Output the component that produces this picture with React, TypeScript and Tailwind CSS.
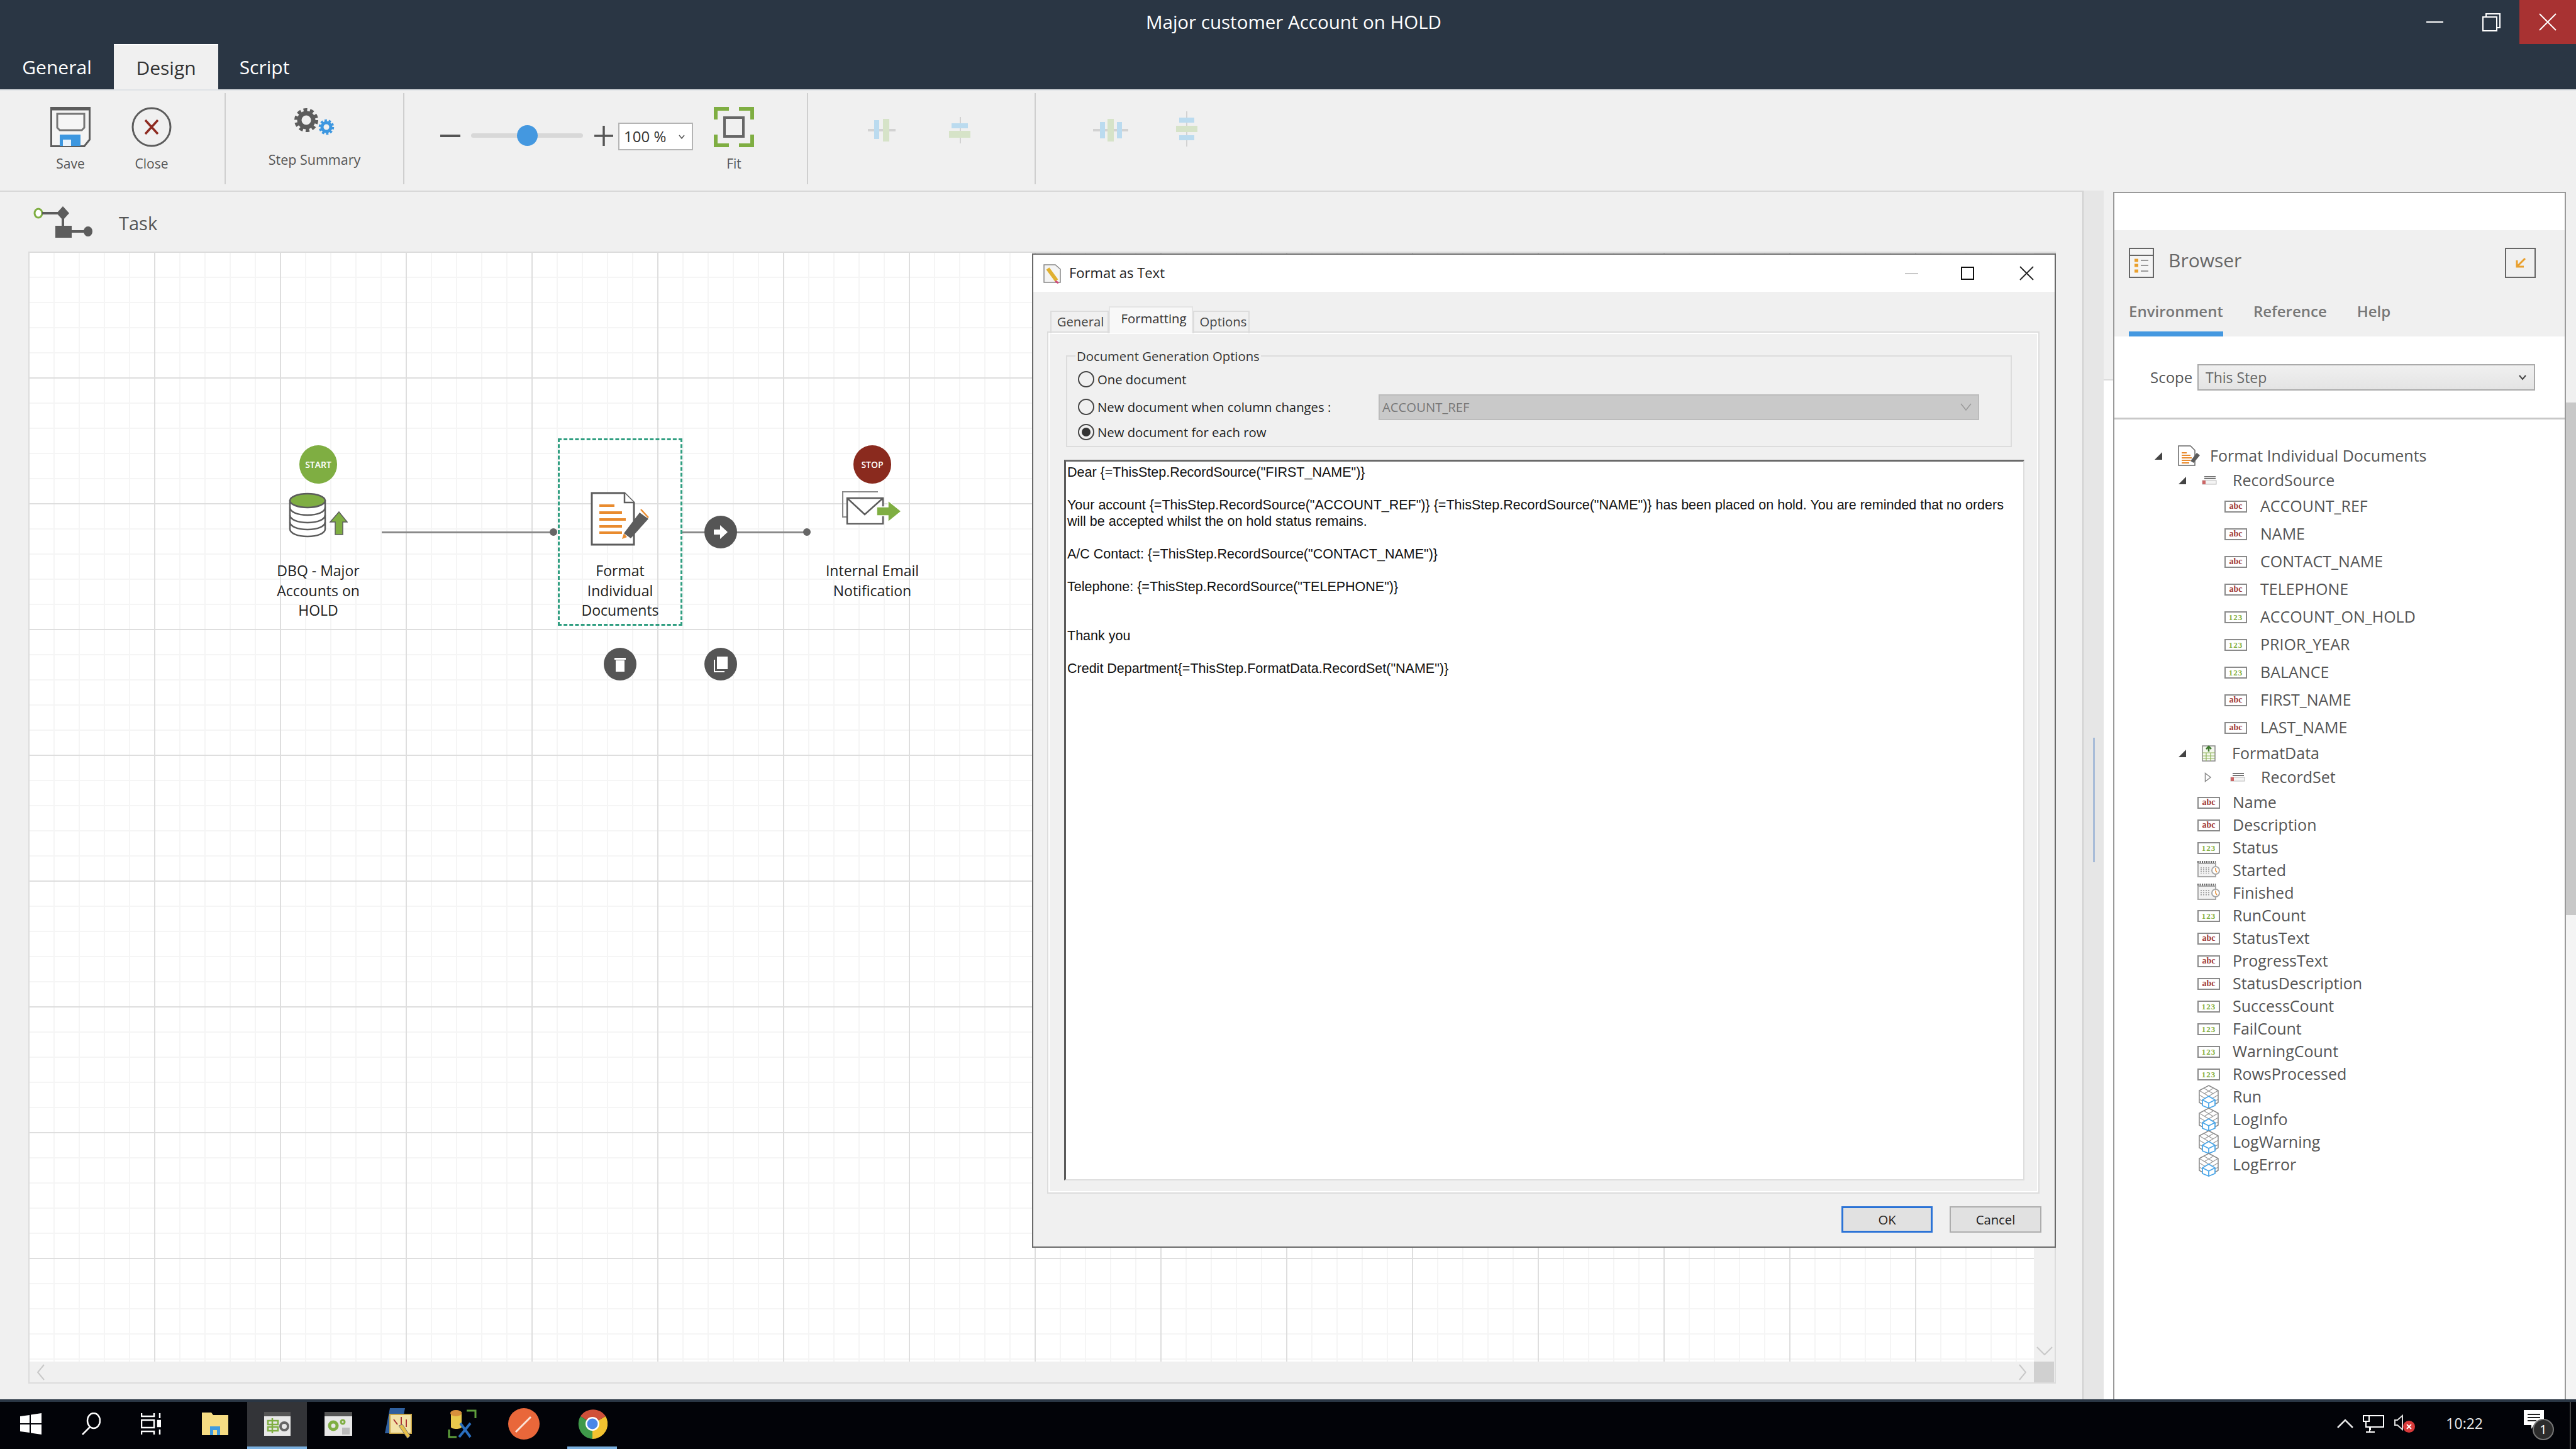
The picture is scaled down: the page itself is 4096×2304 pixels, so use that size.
const Sep = () => <div className="mt-[4px] h-[145px] w-[2px] shrink-0 bg-[#cfcfcf]" />;

const SaveIcon = () => (
  <svg width="64" height="64" viewBox="0 0 64 64" fill="none">
    <path d="M1.5 1.5H62.5V52L54 62.5H1.5Z" fill="#f4f4f4" stroke="#5c5c5c" strokeWidth="3" />
    <path d="M1.5 3H62.5" stroke="#5c5c5c" strokeWidth="5" />
    <path d="M11 11H54V33L50 37H15L11 33Z" fill="#f6f6f6" stroke="#777" strokeWidth="3" />
    <rect x="15" y="44" width="33" height="18" fill="#3d97e0" />
    <rect x="20" y="52" width="13" height="10" fill="#e8f2fb" />
  </svg>
);

const CloseIcon = () => (
  <svg width="64" height="64" viewBox="0 0 64 64" fill="none">
    <circle cx="32" cy="32" r="30" stroke="#5c5c5c" strokeWidth="3" />
    <path d="M22 21L42 43M42 21L22 43" stroke="#8e2a20" strokeWidth="3.5" />
  </svg>
);

const GearsIcon = () => (
  <svg width="66" height="44" viewBox="0 0 66 44" fill="none">
    <circle cx="20" cy="19" r="11" stroke="#5c5c5c" strokeWidth="7" />
    <circle cx="20" cy="19" r="16.5" stroke="#5c5c5c" strokeWidth="5" strokeDasharray="6 4.4" />
    <circle cx="52" cy="30" r="7" stroke="#3d97e0" strokeWidth="5" />
    <circle cx="52" cy="30" r="10.5" stroke="#3d97e0" strokeWidth="3.5" strokeDasharray="3.8 2.8" />
  </svg>
);

const FitIcon = () => (
  <svg width="64" height="64" viewBox="0 0 64 64" fill="none">
    <path d="M3 20V3H24M40 3H61V20M3 44V61H24M40 61H61V44" stroke="#7fae42" strokeWidth="6" />
    <rect x="17" y="17" width="30" height="30" fill="none" stroke="#666" strokeWidth="4" />
  </svg>
);

const TaskIcon = () => (
  <svg width="94" height="50" viewBox="0 0 94 50" fill="none">
    <ellipse cx="8" cy="11" rx="6" ry="7" stroke="#7fae42" strokeWidth="3" fill="#fff" />
    <path d="M14 11H40" stroke="#5c5c5c" strokeWidth="4" />
    <path d="M47 0L57 11L47 22L37 11Z" fill="#5c5c5c" />
    <path d="M47 20V33" stroke="#5c5c5c" strokeWidth="4" />
    <rect x="35" y="31" width="26" height="19" fill="#5c5c5c" />
    <path d="M61 40H82" stroke="#5c5c5c" strokeWidth="4" />
    <ellipse cx="87" cy="40" rx="7" ry="8" fill="#5c5c5c" />
  </svg>
);

const AlignIcon = ({ variant }: { variant: number }) => {
  if (variant === 0)
    return (
      <svg width="44" height="36" viewBox="0 0 44 36">
        <rect y="16" width="44" height="4" fill="#d2d2d2" />
        <rect x="10" y="2" width="8" height="30" fill="#bbdbef" />
        <rect x="24" y="0" width="10" height="36" fill="#d6e3c8" />
      </svg>
    );
  if (variant === 1)
    return (
      <svg width="36" height="42" viewBox="0 0 36 42">
        <rect x="17" width="2" height="42" fill="#d2d2d2" />
        <rect x="4" y="10" width="26" height="8" fill="#bbdbef" />
        <rect x="0" y="22" width="34" height="11" fill="#d6e3c8" />
      </svg>
    );
  if (variant === 2)
    return (
      <svg width="56" height="36" viewBox="0 0 56 36">
        <rect y="16" width="56" height="4" fill="#d2d2d2" />
        <rect x="11" y="5" width="8" height="26" fill="#bbdbef" />
        <rect x="23" y="0" width="10" height="36" fill="#d6e3c8" />
        <rect x="38" y="5" width="8" height="26" fill="#bbdbef" />
      </svg>
    );
  return (
    <svg width="34" height="56" viewBox="0 0 34 56">
      <rect x="16" width="2" height="56" fill="#d2d2d2" />
      <rect x="5" y="10" width="24" height="8" fill="#bbdbef" />
      <rect x="0" y="23" width="34" height="10" fill="#d6e3c8" />
      <rect x="5" y="38" width="24" height="8" fill="#bbdbef" />
    </svg>
  );
};

const DbIcon = () => (
  <svg width="94" height="72" viewBox="0 0 94 72" fill="none">
    <path d="M2 12V58C2 65 14 70 30 70S58 65 58 58V12" fill="#fff" stroke="#5c5c5c" strokeWidth="2.5" />
    <path d="M2 24C2 31 14 36 30 36S58 31 58 24M2 36C2 43 14 48 30 48S58 43 58 36M2 47C2 54 14 59 30 59S58 54 58 47" stroke="#5c5c5c" strokeWidth="2.5" />
    <ellipse cx="30" cy="13" rx="28" ry="11" fill="#7fae42" stroke="#5c5c5c" strokeWidth="2.5" />
    <path d="M80 31L93 47H86V67H74V47H66Z" fill="#7fae42" stroke="#5c5c5c" strokeWidth="1.5" />
  </svg>
);

const DocIcon = () => (
  <svg width="94" height="86" viewBox="0 0 94 86" fill="none">
    <path d="M2 2H54L69 17V84H2Z" fill="#fff" stroke="#5c5c5c" strokeWidth="3" />
    <path d="M54 2V17H69" fill="#fff" stroke="#5c5c5c" strokeWidth="2.5" />
    <path d="M14 22H38M14 33H50M14 44H56M14 55H50M14 65H50" stroke="#e98b2e" strokeWidth="4" />
    <path d="M78 33L92 43L64 74L53 66Z" fill="#5c5c5c" />
    <path d="M80 28L92 41" stroke="#e98b2e" strokeWidth="2.5" />
    <path d="M53 66L50 75L58 72" fill="#e98b2e" />
  </svg>
);

const MailIcon = () => (
  <svg width="95" height="54" viewBox="0 0 95 54" fill="none">
    <path d="M57 2H1V42H8" stroke="#8a8a8a" strokeWidth="2" />
    <rect x="8" y="12" width="57" height="41" fill="#fff" stroke="#5c5c5c" strokeWidth="2.5" />
    <path d="M8 12L36 38L65 12" stroke="#5c5c5c" strokeWidth="2.5" />
    <path d="M55 26H73V16L94 33L73 50V40H55Z" fill="#7fae42" stroke="#fff" strokeWidth="1.5" />
  </svg>
);

const FieldIcon = ({ kind }: { kind: 'abc' | '123' }) => (
  <span className="flex h-[19px] w-[36px] shrink-0 items-center justify-center border-2 border-[#8a8a8a] bg-white">
    <span
      className={
        kind === 'abc'
          ? 'font-["Liberation_Serif"] text-[14px] font-bold leading-none text-[#a23b3b]'
          : 'font-["Liberation_Serif"] text-[13px] font-bold leading-none tracking-[1px] text-[#7fae42]'
      }
    >
      {kind}
    </span>
  </span>
);

const DateIcon = () => (
  <svg width="36" height="26" viewBox="0 0 36 26" fill="none" className="mb-[4px] shrink-0">
    <path d="M0 1.5H29" stroke="#666" strokeWidth="3" strokeDasharray="2 1.5" />
    <rect x="1" y="4" width="28" height="21" fill="#f2f2f2" stroke="#a8a8a8" strokeWidth="2" />
    <path d="M6 10V20M10 10V20M14 10V20M18 10V20" stroke="#aaa" strokeWidth="2" strokeDasharray="2 1" />
    <circle cx="29" cy="15" r="6" fill="#fff" stroke="#a8a8a8" strokeWidth="2" />
    <path d="M29 11V15L31 18" stroke="#e98b2e" strokeWidth="1.5" />
  </svg>
);

const MethodIcon = () => (
  <svg width="34" height="38" viewBox="0 0 34 38" fill="none" className="shrink-0">
    <path d="M17 1L32 9V28L17 37L2 28V9Z" stroke="#888" strokeWidth="1.5" />
    <path d="M2 9L17 18L32 9M9 5L24 14M25 5L10 14M2 16L12 22M32 16L22 22M2 23L10 27M32 23L24 27" stroke="#999" strokeWidth="1.2" />
    <path d="M17 18L27 24V33L17 37L7 33V24Z" fill="#fff" stroke="#4ba6e8" strokeWidth="1.8" />
    <path d="M7 24L17 29L27 24M17 29V37" stroke="#4ba6e8" strokeWidth="1.8" />
  </svg>
);

const SetIcon = () => (
  <svg width="24" height="14" viewBox="0 0 24 14" fill="none" className="shrink-0">
    <path d="M4 1H22M4 4H22" stroke="#777" strokeWidth="2" />
    <rect x="1" y="7" width="22" height="6" fill="#f4f4f4" stroke="#bbb" />
    <rect x="1" y="7" width="5" height="6" fill="#c66" />
  </svg>
);

const Expander = ({ open = true }: { open?: boolean }) =>
  open ? (
    <svg width="14" height="14" viewBox="0 0 14 14" className="shrink-0">
      <path d="M13 1V13H1Z" fill="#444" />
    </svg>
  ) : (
    <svg width="12" height="16" viewBox="0 0 12 16" className="shrink-0" fill="none">
      <path d="M1.5 1.5L10 8L1.5 14.5Z" stroke="#888" strokeWidth="1.5" />
    </svg>
  );

const srcFields: [string, 'abc' | '123'][] = [
  ['ACCOUNT_REF', 'abc'],
  ['NAME', 'abc'],
  ['CONTACT_NAME', 'abc'],
  ['TELEPHONE', 'abc'],
  ['ACCOUNT_ON_HOLD', '123'],
  ['PRIOR_YEAR', '123'],
  ['BALANCE', '123'],
  ['FIRST_NAME', 'abc'],
  ['LAST_NAME', 'abc'],
];

const props: [string, string][] = [
  ['Name', 'abc'],
  ['Description', 'abc'],
  ['Status', '123'],
  ['Started', 'date'],
  ['Finished', 'date'],
  ['RunCount', '123'],
  ['StatusText', 'abc'],
  ['ProgressText', 'abc'],
  ['StatusDescription', 'abc'],
  ['SuccessCount', '123'],
  ['FailCount', '123'],
  ['WarningCount', '123'],
  ['RowsProcessed', '123'],
  ['Run', 'method'],
  ['LogInfo', 'method'],
  ['LogWarning', 'method'],
  ['LogError', 'method'],
];

const bodyLines = [
  'Dear {=ThisStep.RecordSource("FIRST_NAME")}',
  '',
  'Your account {=ThisStep.RecordSource("ACCOUNT_REF")} {=ThisStep.RecordSource("NAME")} has been placed on hold. You are reminded that no orders',
  'will be accepted whilst the on hold status remains.',
  '',
  'A/C Contact: {=ThisStep.RecordSource("CONTACT_NAME")}',
  '',
  'Telephone: {=ThisStep.RecordSource("TELEPHONE")}',
  '',
  '',
  'Thank you',
  '',
  'Credit Department{=ThisStep.FormatData.RecordSet("NAME")}',
];

function Ribbon() {
  return (
    <div className="flex h-[161px] shrink-0 border-t-2 border-[#dfe3e6] bg-[#f0f0f0]">
      <div className="flex w-[357px] shrink-0 gap-[65px] pl-[80px] pt-[26px]">
        <div className="flex w-[64px] flex-col items-center">
          <SaveIcon />
          <span className="mt-[12px] text-[21px] leading-[28px] text-[#555]">Save</span>
        </div>
        <div className="flex w-[64px] flex-col items-center">
          <CloseIcon />
          <span className="mt-[12px] text-[21px] leading-[28px] text-[#555]">Close</span>
        </div>
      </div>
      <Sep />
      <div className="flex w-[282px] shrink-0 flex-col items-center pt-[28px]">
        <GearsIcon />
        <span className="mt-[24px] text-[21.5px] leading-[28px] text-[#555]">Step Summary</span>
      </div>
      <Sep />
      <div className="flex w-[640px] shrink-0 pl-[57px]">
        <div className="mt-[70px] h-[4px] w-[32px] bg-[#555]" />
        <div className="relative ml-[17px] mt-[68px] h-[7px] w-[178px] rounded-full bg-[#d8d8d8]">
          <div className="absolute left-[73px] top-[-13px] h-[33px] w-[33px] rounded-full bg-[#4498e0]" />
        </div>
        <svg width="30" height="32" viewBox="0 0 30 32" className="ml-[18px] mt-[56px] shrink-0">
          <path d="M0 16H30M15 0V32" stroke="#555" strokeWidth="3.5" />
        </svg>
        <div className="ml-[8px] mt-[51px] flex h-[44px] w-[119px] shrink-0 items-center border-2 border-[#b4b4b4] bg-white pl-[7px]">
          <span className="text-[24px] leading-none text-[#333]">100 %</span>
          <svg width="10" height="7" viewBox="0 0 10 7" className="ml-[20px]" fill="none">
            <path d="M1 1L5 6L9 1" stroke="#555" strokeWidth="1.5" />
          </svg>
        </div>
        <div className="ml-[33px] mt-[26px] flex w-[64px] flex-col items-center">
          <FitIcon />
          <span className="mt-[12px] text-[21px] leading-[28px] text-[#555]">Fit</span>
        </div>
      </div>
      <Sep />
      <div className="flex w-[360px] shrink-0 pl-[95px]">
        <div className="mt-[45px]"><AlignIcon variant={0} /></div>
        <div className="ml-[85px] mt-[42px]"><AlignIcon variant={1} /></div>
      </div>
      <Sep />
      <div className="flex pl-[91px]">
        <div className="mt-[45px]"><AlignIcon variant={2} /></div>
        <div className="ml-[76px] mt-[33px]"><AlignIcon variant={3} /></div>
      </div>
    </div>
  );
}

function Diagram() {
  return (
    <>
      <div className="absolute left-[560px] top-[443px] h-[3px] w-[273px] bg-[#8a8a8a]" />
      <div className="absolute left-[827px] top-[438px] h-[12px] w-[12px] rounded-full bg-[#666]" />
      <div className="absolute left-[1038px] top-[443px] h-[3px] w-[197px] bg-[#8a8a8a]" />
      <div className="absolute left-[1230px] top-[438px] h-[12px] w-[12px] rounded-full bg-[#666]" />

      <div className="absolute left-[429px] top-[306px] flex h-[61px] w-[60px] items-center justify-center rounded-full bg-[#7fae42] text-[14px] font-semibold text-white">START</div>
      <div className="absolute left-[412px] top-[381px]"><DbIcon /></div>
      <div className="absolute left-[359px] top-[490px] w-[200px] text-center text-[23px] leading-[31.5px] text-[#222]">DBQ - Major<br />Accounts on<br />HOLD</div>

      <div className="absolute left-[840px] top-[295px] h-[298px] w-[198px] border-[3px] border-dashed border-[#2f9e80]" />
      <div className="absolute left-[892px] top-[380px]"><DocIcon /></div>
      <div className="absolute left-[839px] top-[490px] w-[200px] text-center text-[23px] leading-[31.5px] text-[#222]">Format<br />Individual<br />Documents</div>

      <div className="absolute left-[1310px] top-[306px] flex h-[61px] w-[60px] items-center justify-center rounded-full bg-[#8a2a1e] text-[14px] font-semibold text-white">STOP</div>
      <div className="absolute left-[1292px] top-[378px]"><MailIcon /></div>
      <div className="absolute left-[1240px] top-[490px] w-[200px] text-center text-[23px] leading-[31.5px] text-[#222]">Internal Email<br />Notification</div>

      <div className="absolute left-[1073px] top-[418px] flex h-[52px] w-[52px] items-center justify-center rounded-full bg-[#555]">
        <svg width="26" height="24" viewBox="0 0 26 24"><path d="M2 8H12V1L24 12L12 23V16H2Z" fill="#fff" /></svg>
      </div>
      <div className="absolute left-[913px] top-[628px] flex h-[52px] w-[52px] items-center justify-center rounded-full bg-[#555]">
        <svg width="20" height="26" viewBox="0 0 20 26"><path d="M1 3H19V6H1ZM3 7H17V25H3Z" fill="#fff" /></svg>
      </div>
      <div className="absolute left-[1073px] top-[628px] flex h-[52px] w-[52px] items-center justify-center rounded-full bg-[#555]">
        <svg width="24" height="26" viewBox="0 0 24 26" fill="none">
          <rect x="6" y="1" width="17" height="20" fill="#fff" />
          <path d="M2 6V25H18" stroke="#fff" strokeWidth="2" />
        </svg>
      </div>
    </>
  );
}

function FormatDialog() {
  return (
    <div className="absolute left-[1641px] top-[403px] z-10 flex h-[1581px] w-[1628px] flex-col border-2 border-[#6a6a6a] bg-[#f0f0f0] font-['Open_Sans',sans-serif] text-[20.3px] text-[#222]">
      <div className="flex h-[59px] shrink-0 items-center bg-white pl-[15px]">
        <svg width="30" height="32" viewBox="0 0 30 32" fill="none">
          <path d="M2 2H20L28 9V30H2Z" fill="#f4f4f4" stroke="#888" strokeWidth="1.5" />
          <path d="M8 8L22 27" stroke="#e0b030" strokeWidth="6" />
          <path d="M20 28L25 31" stroke="#d04a7a" strokeWidth="3" />
        </svg>
        <span className="ml-[12px] pb-[2px] text-[22px] text-[#222]">Format as Text</span>
        <div className="ml-auto mr-[33px] flex items-center">
          <div className="h-[2px] w-[21px] bg-[#c8c8c8]" />
          <div className="ml-[68px] h-[21px] w-[21px] border-2 border-[#111]" />
          <svg width="23" height="23" viewBox="0 0 23 23" className="ml-[72px]" fill="none">
            <path d="M1 1L22 22M22 1L1 22" stroke="#222" strokeWidth="1.8" />
          </svg>
        </div>
      </div>

      <div className="relative z-10 mt-[23px] flex h-[43px] shrink-0 items-end pl-[27px]">
        <div className="flex h-[36px] w-[93px] items-center justify-center border-2 border-b-0 border-[#dcdcdc] pb-[3px] pl-[3px] text-[#444]">General</div>
        <div className="flex h-[43px] w-[134px] items-center justify-center border-x-2 border-t-2 border-[#e4e4e4] bg-[#f8f8f8] pb-[7px] pl-[9px] text-[#333]">Formatting</div>
        <div className="flex h-[36px] w-[90px] items-center justify-center border-2 border-b-0 border-[#dcdcdc] pb-[3px] pl-[6px] text-[#444]">Options</div>
      </div>

      <div className="ml-[22px] mr-[24px] mt-[-3px] flex h-[1371px] shrink-0 flex-col border-2 border-[#dcdcdc] pl-[28px] pt-[36px] shadow-[inset_0_0_0_2px_#fff]">
        <div className="relative h-[146px] w-[1504px] shrink-0 border-2 border-[#dcdcdc]">
          <span className="absolute left-[13px] top-[-14px] bg-[#f0f0f0] px-[2px] leading-[26px] text-[#333]">Document Generation Options</span>
          <div className="pl-[17px] pt-[14px]">
            <div className="flex h-[44px] items-center">
              <span className="h-[26px] w-[26px] rounded-full border-2 border-[#444]" />
              <span className="ml-[5px]">One document</span>
            </div>
            <div className="flex h-[44px] items-center">
              <span className="h-[26px] w-[26px] rounded-full border-2 border-[#444]" />
              <span className="ml-[5px]">New document when column changes :</span>
              <div className="ml-auto mr-[50px] flex h-[41px] w-[955px] items-center justify-between border-2 border-[#bcbcbc] bg-[#c9c9c9] pl-[4px] pr-[10px] text-[#777]">
                <span>ACCOUNT_REF</span>
                <svg width="18" height="12" viewBox="0 0 18 12" fill="none"><path d="M1 1L9 11L17 1" stroke="#999" strokeWidth="1.5" /></svg>
              </div>
            </div>
            <div className="flex h-[36px] items-center">
              <span className="flex h-[26px] w-[26px] items-center justify-center rounded-full border-2 border-[#444]">
                <span className="h-[14px] w-[14px] rounded-full bg-[#333]" />
              </span>
              <span className="ml-[5px]">New document for each row</span>
            </div>
          </div>
        </div>
        <div className="ml-[-3px] mt-[20px] h-[1146px] w-[1527px] shrink-0 border-b-2 border-l-[3px] border-r-2 border-t-[3px] border-b-[#dedede] border-l-[#5a5a5a] border-r-[#dedede] border-t-[#6a6a6a] bg-white pl-[2px] pt-[4px] font-['Liberation_Sans',sans-serif] text-[21.5px] leading-[26px] text-[#111]">
          {bodyLines.map((line, i) => (
            <div key={i} className="h-[26px] whitespace-nowrap">{line}</div>
          ))}
        </div>
      </div>

      <div className="mr-[21px] mt-[20px] flex justify-end gap-[27px]">
        <div className="flex h-[42px] w-[145px] items-center justify-center border-[3px] border-[#2b73d6] bg-[#e1e1e1]">OK</div>
        <div className="flex h-[42px] w-[146px] items-center justify-center border-2 border-[#adadad] bg-[#e1e1e1]">Cancel</div>
      </div>
    </div>
  );
}

function BrowserPanel() {
  return (
    <div className="mt-[2px] flex w-[720px] shrink-0 flex-col border-x-2 border-t-2 border-[#9a9a9a] bg-white text-[#555]">
      <div className="h-[59px] shrink-0" />
      <div className="h-[169px] shrink-0 bg-[#f0f0f0] pl-[23px]">
        <div className="flex pt-[28px]">
          <svg width="40" height="48" viewBox="0 0 40 48" fill="none">
            <rect x="1" y="1" width="38" height="46" fill="#f4f4f4" stroke="#666" strokeWidth="2" />
            <path d="M1 12H39" stroke="#666" strokeWidth="2" />
            <path d="M9 20H15M9 28H15M9 37H15" stroke="#e9a02e" strokeWidth="5" />
            <path d="M19 20H31M19 28H31M19 37H31" stroke="#999" strokeWidth="2" />
          </svg>
          <span className="ml-[23px] text-[30px] leading-[40px] text-[#666]">Browser</span>
          <div className="ml-auto mr-[46px] flex h-[48px] w-[49px] items-center justify-center border-2 border-[#666]">
            <svg width="18" height="18" viewBox="0 0 18 18" fill="none"><path d="M16 2L3 15M3 5V15H14" stroke="#e9a02e" strokeWidth="3" /></svg>
          </div>
        </div>
        <div className="mt-[35px] flex gap-[48px] text-[24px] font-semibold leading-[36px] text-[#777]">
          <div className="flex flex-col">
            <span>Environment</span>
            <div className="mt-[14px] h-[8px] bg-[#4498e0]" />
          </div>
          <span>Reference</span>
          <span>Help</span>
        </div>
      </div>
      <div className="flex h-[132px] shrink-0 items-start border-b-[3px] border-[#c8c8c8] pl-[57px] pt-[44px]">
        <span className="w-[75px] text-[24px] leading-[42px]">Scope</span>
        <div className="flex h-[42px] w-[537px] items-center justify-between border-2 border-[#aaa] bg-gradient-to-b from-[#f0f0f0] to-[#e4e4e4] pl-[11px] pr-[12px] text-[23px] text-[#666]">
          <span>This Step</span>
          <svg width="12" height="9" viewBox="0 0 12 9" fill="none"><path d="M1 1L6 7L11 1" stroke="#444" strokeWidth="2" /></svg>
        </div>
      </div>
      <div className="pt-[37px] text-[25px]">
        <div className="flex h-[41px] items-center pl-[63px]">
          <Expander />
          <svg width="36" height="34" viewBox="0 0 36 34" className="ml-[24px] shrink-0" fill="none">
            <path d="M1 1H20L27 8V32H1Z" fill="#fff" stroke="#666" strokeWidth="1.5" />
            <path d="M6 12H14M6 16H20M6 20H22M6 24H20M6 28H18" stroke="#e98b2e" strokeWidth="2" />
            <path d="M30 12L35 16L25 28L20 25Z" fill="#5c5c5c" />
          </svg>
          <span className="ml-[15px]">Format Individual Documents</span>
        </div>
        <div className="flex h-[38px] items-center pl-[101px]">
          <Expander />
          <span className="ml-[24px]"><SetIcon /></span>
          <span className="ml-[25px]">RecordSource</span>
        </div>
        {srcFields.map(([name, kind]) => (
          <div key={name} className="flex h-[44px] items-center pl-[175px]">
            <FieldIcon kind={kind} />
            <span className="ml-[21px]">{name}</span>
          </div>
        ))}
        <div className="flex h-[37px] items-center pl-[101px]">
          <Expander />
          <svg width="22" height="26" viewBox="0 0 22 26" className="ml-[24px] shrink-0" fill="none">
            <rect x="1" y="1" width="20" height="24" fill="#f4f8ee" stroke="#888" strokeWidth="1.5" />
            <path d="M1 12H21M1 17H21M1 21H21M7 12V25M14 12V25" stroke="#8fb45a" strokeWidth="1.2" />
            <path d="M11 10V3M7 6L11 2L15 6" stroke="#3f7a2e" strokeWidth="2.5" />
          </svg>
          <span className="ml-[26px]">FormatData</span>
        </div>
        <div className="flex h-[39px] items-center pl-[143px]">
          <Expander open={false} />
          <span className="ml-[29px]"><SetIcon /></span>
          <span className="ml-[25px]">RecordSet</span>
        </div>
        <div className="mt-[3px]">
          {props.map(([name, kind]) => (
            <div key={name} className="flex h-[36px] items-center pl-[132px]">
              <span className="flex w-[36px] shrink-0 justify-center">
                {kind === 'abc' && <FieldIcon kind="abc" />}
                {kind === '123' && <FieldIcon kind="123" />}
                {kind === 'date' && <DateIcon />}
                {kind === 'method' && <MethodIcon />}
              </span>
              <span className="ml-[20px]">{name}</span>
            </div>
          ))}
        </div>
      </div>
    </div>
  );
}

function Taskbar() {
  return (
    <div className="flex h-[79px] shrink-0 items-center border-t-4 border-[#2a3644] bg-[#020308] pb-[6px] text-white">
      <svg width="34" height="34" viewBox="0 0 34 34" className="ml-[32px] shrink-0">
        <path d="M0 5L15 3V16H0ZM17 2.5L34 0V16H17ZM0 18H15V31L0 29ZM17 18H34V34L17 31.5Z" fill="#fff" />
      </svg>
      <svg width="32" height="36" viewBox="0 0 32 36" className="ml-[62px] shrink-0" fill="none">
        <ellipse cx="21" cy="13" rx="10" ry="12" stroke="#fff" strokeWidth="2.5" />
        <path d="M15 23L3 35" stroke="#fff" strokeWidth="2.5" />
      </svg>
      <svg width="32" height="34" viewBox="0 0 32 34" className="ml-[64px] shrink-0" fill="none" stroke="#fff" strokeWidth="2.5">
        <path d="M1 0V5H21V0M1 34V29H21V34" />
        <rect x="1" y="11" width="20" height="12" />
        <path d="M30 0V8M30 26V34" />
        <rect x="27" y="12" width="5" height="9" fill="#fff" />
      </svg>
      <svg width="44" height="38" viewBox="0 0 44 38" className="ml-[64px] shrink-0">
        <path d="M1 1H16L19 5H43V37H1Z" fill="#f6dc83" />
        <path d="M14 37V23H30V37H25V29H19V37Z" fill="#3f9be0" />
        <path d="M14 23H30V28H14Z" fill="#3f9be0" />
      </svg>
      <div className="ml-[29px] flex h-[75px] w-[95px] shrink-0 flex-col self-start bg-[#333438]">
        <div className="flex flex-1 items-center justify-center pb-[2px]">
          <svg width="42" height="38" viewBox="0 0 42 38">
            <rect width="42" height="38" fill="#e8e8e8" />
            <rect width="42" height="7" fill="#555" />
            <path d="M6 14H22V20H6ZM6 24H22V30H6ZM13 10V34" stroke="#7fae42" strokeWidth="2.5" fill="none" />
            <circle cx="32" cy="23" r="6" fill="none" stroke="#666" strokeWidth="4" />
          </svg>
        </div>
        <div className="h-[4px] bg-[#7ab0e0]" />
      </div>
      <svg width="44" height="38" viewBox="0 0 44 38" className="ml-[28px] shrink-0">
        <rect width="44" height="38" fill="#e8e8e8" />
        <rect width="44" height="7" fill="#555" />
        <circle cx="14" cy="22" r="6" fill="none" stroke="#7fae42" strokeWidth="5" />
        <circle cx="29" cy="16" r="3" fill="none" stroke="#7fae42" strokeWidth="3" />
        <rect x="28" y="25" width="12" height="11" fill="#bbb" />
      </svg>
      <svg width="44" height="50" viewBox="0 0 44 50" className="ml-[52px] shrink-0">
        <path d="M8 0H32L24 40H0Z" fill="#2f5f9e" />
        <rect x="8" y="10" width="34" height="30" fill="#f3e3a8" stroke="#c9a648" strokeWidth="2" />
        <path d="M14 18L20 26M26 14V30M34 18V30" stroke="#a33" strokeWidth="2" />
        <path d="M22 28L36 48L40 44L28 26Z" fill="#e8c14a" stroke="#777" />
      </svg>
      <svg width="46" height="46" viewBox="0 0 46 46" className="ml-[56px] shrink-0">
        <path d="M5 5C5 1 22 1 22 5V28C22 32 5 32 5 28Z" fill="#e9c94c" />
        <ellipse cx="13" cy="6" rx="9" ry="5" fill="#d8903c" />
        <path d="M30 2H44V14M2 32V44H14" stroke="#5fa03c" strokeWidth="3" fill="none" />
        <path d="M18 44L36 22M36 44L20 22" stroke="#2a6fc0" strokeWidth="4" fill="none" />
      </svg>
      <div className="ml-[50px] flex h-[50px] w-[50px] shrink-0 items-center justify-center rounded-full bg-[#e9673a]">
        <svg width="32" height="32" viewBox="0 0 32 32"><path d="M3 29L27 5" stroke="#fbe3d6" strokeWidth="3" /></svg>
      </div>
      <div className="ml-[44px] flex h-[75px] w-[79px] shrink-0 flex-col self-start">
        <div className="flex flex-1 items-center justify-center pb-[2px]">
          <svg width="48" height="48" viewBox="0 0 48 48">
            <path d="M24 24L5 12A24 24 0 0 1 45 12Z" fill="#d0503a" />
            <path d="M24 24L45 12A24 24 0 0 1 24 48Z" fill="#f2c230" />
            <path d="M24 24L24 48A24 24 0 0 1 5 12Z" fill="#3f9a4a" />
            <circle cx="24" cy="24" r="11" fill="#fff" />
            <circle cx="24" cy="24" r="8.5" fill="#4a86e8" />
          </svg>
        </div>
        <div className="h-[4px] bg-[#7ab0e0]" />
      </div>
      <div className="ml-auto flex items-center">
        <svg width="26" height="16" viewBox="0 0 26 16" fill="none" className="mr-[15px]"><path d="M1 14L13 2L25 14" stroke="#e8e8e8" strokeWidth="2.5" /></svg>
        <svg width="34" height="28" viewBox="0 0 34 28" fill="none" stroke="#fff" strokeWidth="2" className="mr-[16px]">
          <path d="M5 1H33V19H5Z M11 19V27 M5 27H19 M12 19V24" />
          <rect x="1" y="1" width="9" height="9" fill="#020308" />
        </svg>
        <div className="relative mr-[50px] h-[30px] w-[32px]">
          <svg width="14" height="26" viewBox="0 0 14 26" fill="none"><path d="M1 9H5L13 2V24L5 17H1Z" stroke="#ddd" strokeWidth="2" /></svg>
          <div className="absolute left-[14px] top-[10px] flex h-[19px] w-[19px] items-center justify-center rounded-full bg-[#d83a3a]">
            <svg width="9" height="9" viewBox="0 0 9 9" fill="none"><path d="M1 1L8 8M8 1L1 8" stroke="#fff" strokeWidth="1.8" /></svg>
          </div>
        </div>
        <span className="mr-[65px] text-[23px] leading-none text-[#e8e8e8]">10:22</span>
        <div className="relative mr-[41px] h-[44px] w-[32px]">
          <svg width="33" height="32" viewBox="0 0 33 32"><path d="M0 0H32V24H16L12 30V24H0Z" fill="#fff" /><path d="M6 7H26M6 12H26M6 17H20" stroke="#222" strokeWidth="2" /></svg>
          <div className="absolute left-[14px] top-[14px] flex h-[34px] w-[34px] items-center justify-center rounded-full border-2 border-[#777] bg-[#2c2c2c] text-[20px] leading-none">1</div>
        </div>
      </div>
      <div className="mr-[8px] h-[75px] w-[2px] self-start bg-[#444]" />
    </div>
  );
}

export default function App() {
  return (
    <div className="relative flex h-[2304px] w-[4096px] flex-col overflow-hidden bg-[#f0f0f0] font-['Open_Sans',sans-serif]">
      <div className="flex h-[142px] shrink-0 flex-col bg-[#2a3644] text-white">
        <div className="flex h-[70px] items-start">
          <span className="ml-[1822px] mt-[13px] text-[29.5px] leading-[44px]">Major customer Account on HOLD</span>
          <div className="ml-auto flex items-start">
            <div className="mt-[34px] h-[2px] w-[27px] bg-white" />
            <svg width="30" height="30" viewBox="0 0 30 30" fill="none" className="ml-[62px] mt-[21px]">
              <rect x="1" y="6" width="22" height="22" stroke="#fff" strokeWidth="2" />
              <path d="M6 6V1H28V23H23" stroke="#fff" strokeWidth="2" />
            </svg>
            <div className="ml-[29px] flex h-[70px] w-[90px] items-center justify-center bg-[#a83232]">
              <svg width="28" height="28" viewBox="0 0 28 28" fill="none"><path d="M1 1L27 27M27 1L1 27" stroke="#fff" strokeWidth="2" /></svg>
            </div>
          </div>
        </div>
        <div className="flex h-[72px] text-[30px]">
          <div className="flex w-[181px] items-center justify-center">General</div>
          <div className="flex w-[166px] items-center justify-center border-t-2 border-white bg-[#f0f0f0] text-[#333]">Design</div>
          <div className="flex w-[147px] items-center justify-center">Script</div>
        </div>
      </div>

      <Ribbon />

      <div className="flex h-[1922px] shrink-0">
        <div className="flex w-[3313px] shrink-0 flex-col border-t-2 border-r-2 border-[#d8d8d8] border-r-[#d0d0d0]">
          <div className="flex h-[95px] shrink-0 items-center pl-[53px]">
            <TaskIcon />
            <span className="ml-[42px] mt-[4px] text-[29px] text-[#555]">Task</span>
          </div>
          <div className="ml-[45px] flex h-[1800px] w-[3224px] shrink-0 flex-col border-2 border-[#dcdcdc]">
            <div className="flex h-[1763px] shrink-0">
              <div className="relative w-[3187px] shrink-0 bg-white bg-[linear-gradient(#dedede_2px,transparent_2px),linear-gradient(90deg,#dedede_2px,transparent_2px),linear-gradient(#f5f5f5_2px,transparent_2px),linear-gradient(90deg,#f5f5f5_2px,transparent_2px)] bg-[size:200px_200px,200px_200px,40px_40px,40px_40px] bg-[position:-2px_-2px]">
                <Diagram />
              </div>
              <div className="flex flex-1 flex-col items-center justify-end pb-[10px]">
                <svg width="26" height="14" viewBox="0 0 26 14" fill="none"><path d="M1 1L13 13L25 1" stroke="#c8c8c8" strokeWidth="2" /></svg>
              </div>
            </div>
            <div className="flex flex-1 items-center justify-between pl-[12px]">
              <svg width="12" height="26" viewBox="0 0 12 26" fill="none"><path d="M11 1L1 13L11 25" stroke="#c8c8c8" strokeWidth="2" /></svg>
              <div className="flex h-full items-center">
                <svg width="12" height="26" viewBox="0 0 12 26" fill="none"><path d="M1 1L11 13L1 25" stroke="#c8c8c8" strokeWidth="2" /></svg>
                <div className="ml-[12px] mr-[1px] h-full w-[32px] bg-[#d0d0d0]" />
              </div>
            </div>
          </div>
        </div>

        <div className="relative w-[32px] shrink-0 bg-[#e6e6e6]">
          <div className="absolute left-[15px] top-[870px] h-[198px] w-[3px] bg-[#a8bcd8]" />
        </div>
        <div className="flex w-[15px] shrink-0 flex-col">
          <div className="h-[167px] bg-[#f0f0f0]" />
          <div className="mt-[133px] h-[2px] bg-[#dcdcdc]" />
          <div className="flex-1 bg-white" />
        </div>

        <BrowserPanel />

        <div className="flex w-[16px] shrink-0 flex-col">
          <div className="h-[337px] bg-[#f0f0f0]" />
          <div className="h-[815px] bg-[#c8c8c8]" />
          <div className="flex-1 bg-[#f4f4f4]" />
        </div>
      </div>

      <Taskbar />

      <FormatDialog />
    </div>
  );
}
